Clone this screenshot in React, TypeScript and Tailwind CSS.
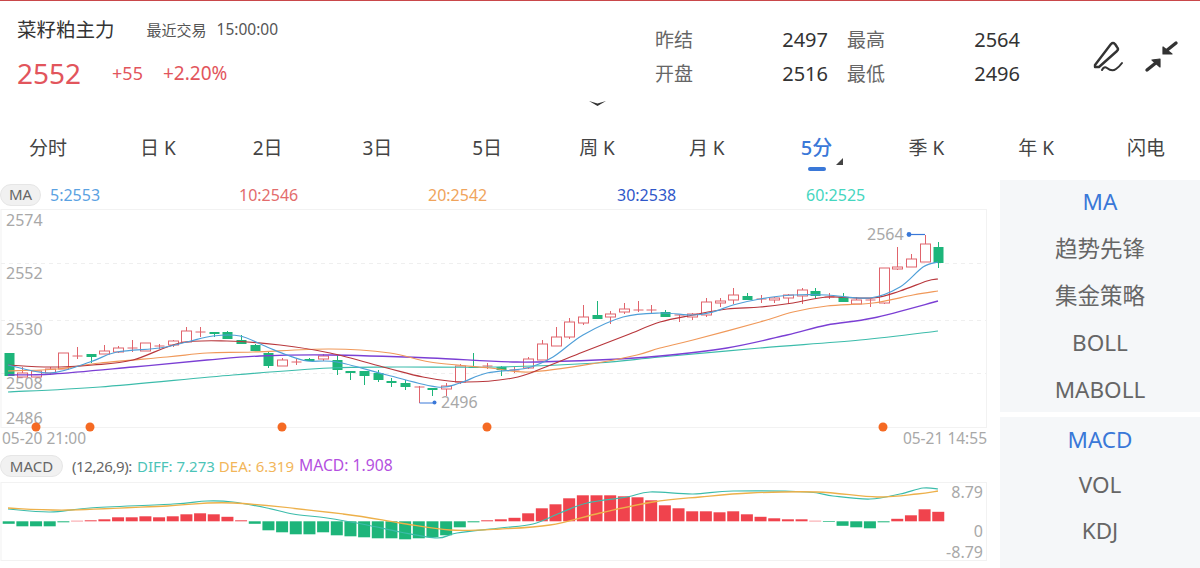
const red = "#e0646c"
const green = "#1db57a"

// [color, bodyTop, bodyBottom, high, low] in page pixels
const candles: [string, number, number, number, number][] = [
  ["g", 353, 376, 353, 376], ["r", 373, 377, 367, 377], ["r", 371, 377, 371, 377], ["r", 369, 373, 367, 375],
  ["r", 353, 369, 353, 369], ["r", 356, 357, 347, 359], ["g", 354, 357, 354, 363], ["r", 351, 354, 345, 354],
  ["r", 348, 352, 346, 353], ["r", 348, 349, 340, 352], ["r", 343, 351, 343, 351], ["r", 346, 347, 344, 349],
  ["r", 341, 345, 340, 347], ["r", 331, 342, 327, 342], ["r", 332, 332, 327, 337], ["g", 332, 334, 332, 337],
  ["g", 332, 339, 331, 339], ["g", 340, 344, 335, 344], ["g", 345, 351, 344, 351], ["g", 353, 366, 352, 368],
  ["r", 360, 366, 358, 366], ["r", 362, 362, 359, 365], ["g", 359, 361, 358, 361], ["r", 356, 359, 354, 361],
  ["g", 360, 370, 355, 375], ["g", 371, 373, 371, 380], ["g", 371, 376, 371, 385], ["g", 373, 380, 370, 382],
  ["g", 381, 383, 378, 387], ["g", 383, 387, 380, 390], ["r", 387, 387, 386, 403], ["g", 388, 390, 388, 396],
  ["r", 386, 389, 383, 396], ["r", 366, 382, 364, 384], ["g", 367, 368, 353, 368], ["r", 366, 366, 363, 369],
  ["g", 367, 370, 366, 376], ["r", 370, 370, 367, 373], ["r", 359, 368, 357, 369], ["r", 344, 360, 340, 360],
  ["r", 337, 346, 327, 346], ["r", 322, 337, 318, 339], ["r", 317, 323, 305, 325], ["g", 315, 319, 301, 319],
  ["r", 314, 317, 311, 324], ["r", 309, 312, 303, 314], ["r", 310, 310, 301, 312], ["r", 310, 310, 305, 313],
  ["g", 312, 317, 310, 317], ["r", 315, 316, 315, 322], ["r", 314, 317, 313, 320], ["r", 302, 315, 298, 317],
  ["r", 301, 303, 298, 307], ["r", 295, 300, 288, 304], ["g", 296, 300, 293, 300], ["r", 299, 299, 295, 303],
  ["r", 298, 300, 297, 303], ["r", 295, 298, 294, 304], ["r", 290, 296, 288, 304], ["g", 291, 296, 288, 299],
  ["r", 297, 297, 293, 299], ["g", 297, 302, 293, 302], ["r", 300, 304, 297, 304], ["r", 300, 300, 299, 307],
  ["r", 268, 303, 268, 304], ["r", 267, 269, 247, 270], ["r", 259, 267, 254, 267], ["r", 244, 262, 235, 262],
  ["g", 247, 263, 242, 268],
]

const ma5 = "8,365 50,373 90,362 117,352 160,348 187,342 213,336 240,336 267,347 287,355 307,361 337,362 387,375 437,387 460,383 487,373 527,368 553,357 583,335 623,317 660,313 693,315 713,312 733,305 760,299 793,295 827,295 870,298 900,287 923,267 938,262"
const ma10 = "8,365 50,367 93,365 133,360 180,343 227,341 280,345 330,353 387,368 423,377 463,382 513,378 543,368 583,352 627,335 660,322 693,315 727,309 760,307 793,303 827,297 873,298 900,291 927,281 938,279"
const ma20 = "8,371 57,369 100,363 167,357 207,353 253,352 330,349 390,353 430,362 490,368 530,372 597,363 637,355 660,348 693,340 760,322 793,312 827,306 873,303 913,295 938,291"
const ma30 = "8,375 53,374 133,367 207,360 260,356 330,355 430,358 517,362 597,360 660,356 727,348 787,335 827,325 873,318 938,301"
const ma60 = "8,392 100,387 233,375 330,368 397,367 497,367 597,363 660,357 760,348 860,340 938,331"

const diff = "8,509 50,512 90,508 173,504 207,501 233,502 267,508 293,514 327,518 367,525 400,532 437,538 457,533 500,528 533,524 560,513 587,503 627,497 650,492 693,494 733,491 807,492 833,496 870,499 900,494 923,488 938,489"
const dea = "8,508 67,510 167,506 233,503 343,514 400,523 450,530 500,529 550,525 600,513 653,502 700,497 750,493 817,492 877,497 917,494 938,491"

// positive goes up in red, negative goes down in green
const macdBars = [
  -2.5, -5, -5, -5, -1, 0.5, 1, 2, 4, 4, 5, 4, 5, 7, 8, 7, 4.5, 1, -2.5, -9, -11, -13, -13, -11, -14, -15, -16, -17, -17,
  -18, -17, -16, -14, -6, -1, 1, 2, 3.5, 8, 13, 17, 23, 26, 26, 26, 25, 24, 21, 16, 13, 10, 10, 9, 10, 7, 4.5, 3, 2, 2,
  0.5, -0.7, -4.5, -6, -7, -1, 2.5, 6, 12, 9.5,
]

const slotX = (i: number) => 8.7 + i * 13.67

// catmull-rom through the points so the averages don't look like polylines
function smooth(points: string) {
  const p = points.split(" ").map((s) => s.split(",").map(Number))
  let d = `M${p[0][0]} ${p[0][1]}`
  for (let i = 0; i < p.length - 1; i++) {
    const a = p[Math.max(i - 1, 0)]
    const b = p[i]
    const c = p[i + 1]
    const e = p[Math.min(i + 2, p.length - 1)]
    d += ` C${b[0] + (c[0] - a[0]) / 6} ${b[1] + (c[1] - a[1]) / 6} ${c[0] - (e[0] - b[0]) / 6} ${c[1] - (e[1] - b[1]) / 6} ${c[0]} ${c[1]}`
  }
  return d
}

function Pill({ label, width }: { label: string; width: string }) {
  return (
    <span className={`flex h-[22px] items-center justify-center rounded-full border border-[#e6e6e6] bg-[#f1f1f1] text-[15px] text-[#666] ${width}`}>
      {label}
    </span>
  )
}

function MainChart() {
  const labels: [string, number][] = [["2574", 226], ["2552", 279], ["2530", 335], ["2508", 389], ["2486", 424]]
  return (
    <svg viewBox="0 209 1000 219" className="block h-[219px] w-[1000px] overflow-visible">
      <rect x="1" y="209.5" width="985.5" height="218" fill="none" stroke="#f2f2f2" />
      {[263.5, 320.5, 373.5].map((y) => (
        <line key={y} x1="1" x2="986" y1={y} y2={y} stroke="#efefef" strokeDasharray="4 4" />
      ))}
      {labels.map(([t, y]) => (
        <text key={t} x="6" y={y} fontSize="16" fill="#a8a8a8">{t}</text>
      ))}
      {candles.map(([c, top, bottom, high, low], i) => {
        const x = Math.round(slotX(i)) + 0.5
        const color = c === "g" ? green : red
        return (
          <g key={i} stroke={color}>
            <line x1={x} x2={x} y1={high} y2={low} strokeWidth="1" />
            {c === "g" ? (
              <rect x={x - 5} y={top} width="10" height={Math.max(bottom - top, 1)} fill={color} strokeWidth="0" />
            ) : bottom - top < 2 ? (
              <line x1={x - 5} x2={x + 5} y1={top} y2={top} strokeWidth="1" />
            ) : (
              <rect x={x - 5} y={top} width="10" height={bottom - top} fill="#fff" strokeWidth="1" />
            )}
          </g>
        )
      })}
      <path d={smooth(ma60)} fill="none" stroke="#3cbcab" strokeWidth="1.2" />
      <path d={smooth(ma30)} fill="none" stroke="#7b3fd4" strokeWidth="1.3" />
      <path d={smooth(ma20)} fill="none" stroke="#f0995a" strokeWidth="1.2" />
      <path d={smooth(ma10)} fill="none" stroke="#b8373c" strokeWidth="1.2" />
      <path d={smooth(ma5)} fill="none" stroke="#4f9fd8" strokeWidth="1.2" />

      <polyline points="419.5,403 434,403" fill="none" stroke="#3a78d8" strokeWidth="1" />
      <circle cx="434.5" cy="402.5" r="2" fill="#3a78d8" />
      <text x="441" y="408" fontSize="16" fill="#a8a8a8">2496</text>
      <polyline points="909,234.5 925,234.5" fill="none" stroke="#3a78d8" strokeWidth="1.2" />
      <circle cx="909" cy="234.5" r="2.4" fill="#3a78d8" />
      <text x="867" y="240" fontSize="16" fill="#a8a8a8">2564</text>

      {[36, 90, 282, 487, 883].map((x) => (
        <circle key={x} cx={x} cy="427" r="4.5" fill="#f56a23" />
      ))}
    </svg>
  )
}

function MacdChart() {
  const zero = 521.3
  return (
    <svg viewBox="0 482 1000 80" className="block h-[80px] w-[1000px] overflow-visible">
      <rect x="1" y="482.5" width="985.5" height="78" fill="none" stroke="#f2f2f2" />
      {macdBars.map((v, i) => (
        <rect
          key={i}
          x={slotX(i) - 6}
          y={v > 0 ? zero - v : zero}
          width="12"
          height={Math.abs(v)}
          fill={v > 0 ? "#f0434d" : green}
        />
      ))}
      <path d={smooth(diff)} fill="none" stroke="#3cbcab" strokeWidth="1.2" />
      <path d={smooth(dea)} fill="none" stroke="#edb04a" strokeWidth="1.3" />
      <text x="983" y="498" textAnchor="end" fontSize="16" fill="#a8a8a8">8.79</text>
      <text x="983" y="537" textAnchor="end" fontSize="16" fill="#a8a8a8">0</text>
      <text x="983" y="558" textAnchor="end" fontSize="16" fill="#a8a8a8">-8.79</text>
    </svg>
  )
}

function PenIcon() {
  return (
    <svg viewBox="0 0 34 34" className="h-[34px] w-[34px]" fill="none" stroke="#333" strokeWidth="2.4" strokeLinejoin="round" strokeLinecap="round">
      <path d="M5 25 L21 4 Q23 2 25 4 L27 7 Q29 9 27 11 L9 27 L5 27 Z" />
      <path d="M12 30 Q14 26 17 28 Q22 32 26 29 Q29 27 32 23" strokeWidth="2" />
    </svg>
  )
}

function ShrinkIcon() {
  return (
    <svg viewBox="0 0 36 34" className="h-[34px] w-[36px]" fill="#333" stroke="#333" strokeLinejoin="round">
      <path d="M32 3 L22 11" strokeWidth="3.4" strokeLinecap="round" />
      <path d="M19 7 L19 14 L28 14 Z" strokeWidth="1.2" />
      <path d="M3 30 L13 22" strokeWidth="3.4" strokeLinecap="round" />
      <path d="M8 20 L16 19 L16 27 Z" strokeWidth="1.2" />
    </svg>
  )
}

function Stat({ label, value }: { label: string; value: string }) {
  return (
    <div className="flex w-[173px] items-center justify-between">
      <span className="text-[19px] text-[#666]">{label}</span>
      <span className="text-[20px] text-[#333]">{value}</span>
    </div>
  )
}

const tabs = ["分时", "日 K", "2日", "3日", "5日", "周 K", "月 K", "5分", "季 K", "年 K", "闪电"]
const overlays = ["MA", "趋势先锋", "集金策略", "BOLL", "MABOLL"]
const subs = ["MACD", "VOL", "KDJ"]
const maValues = [
  ["5:2553", "text-[#5ba2e2]"],
  ["10:2546", "text-[#e36c6c]"],
  ["20:2542", "text-[#f0a45c]"],
  ["30:2538", "text-[#2f57c9]"],
  ["60:2525", "text-[#45d6bf]"],
]

export default function App() {
  return (
    <div className="flex h-[568px] w-[1200px] flex-col overflow-hidden border-t border-[#c9484a] bg-white font-['Noto_Sans','Noto_Sans_CJK_SC',sans-serif]">
      {/* Quote header */}
      <div className="flex h-[94px] shrink-0">
        <div className="w-[655px] shrink-0 pl-[17px] pt-[15px]">
          <div className="flex h-[28px] items-center">
            <span className="text-[19.5px] text-[#333]">菜籽粕主力</span>
            <span className="ml-[32px] text-[15px] text-[#555]">最近交易</span>
            <span className="ml-[10px] text-[15.5px] text-[#555]">15:00:00</span>
          </div>
          <div className="mt-[5px] flex h-[48px] items-center text-[#e2555c]">
            <span className="text-[28px]">2552</span>
            <span className="ml-[31px] text-[18px]">+55</span>
            <span className="ml-[20px] text-[19px]">+2.20%</span>
          </div>
        </div>
        <div className="w-[365px] shrink-0 pt-[22px]">
          <div className="flex h-[34px] gap-[19px]">
            <Stat label="昨结" value="2497" />
            <Stat label="最高" value="2564" />
          </div>
          <div className="flex h-[34px] gap-[19px]">
            <Stat label="开盘" value="2516" />
            <Stat label="最低" value="2496" />
          </div>
        </div>
        <div className="flex items-start gap-[20px] pl-[70px] pt-[39px]">
          <PenIcon />
          <ShrinkIcon />
        </div>
      </div>

      <div className="flex h-[16px] shrink-0 justify-center pr-[6px]">
        <svg viewBox="0 0 17 5" className="mt-[6px] h-[5px] w-[17px]" fill="#333">
          <path d="M0 0 L8.5 2.6 L17 0 L8.5 5 Z" />
        </svg>
      </div>

      {/* Period tabs */}
      <div className="flex h-[69px] shrink-0 items-start justify-between pl-[18px] pr-[24px] pt-[23px]">
        {tabs.map((t) => (
          <div key={t} className="relative flex w-[60px] flex-col items-center">
            <span className={t === "5分" ? "text-[20px] leading-[28px] font-medium text-[#3a78d8]" : "text-[19px] leading-[28px] text-[#444]"}>{t}</span>
            {t === "5分" && (
              <>
                <span className="absolute top-[33px] h-[4px] w-[18px] rounded-full bg-[#3a78d8]" />
                <span className="absolute left-[49px] top-[24px] h-0 w-0 border-b-[7px] border-l-[7px] border-b-[#444] border-l-transparent" />
              </>
            )}
          </div>
        ))}
      </div>

      <div className="flex min-h-0 flex-1">
        <div className="w-[1000px] shrink-0">
          {/* MA legend */}
          <div className="flex h-[29px] items-center">
            <Pill label="MA" width="w-[41px]" />
            <div className="ml-[9px] flex">
              {maValues.map(([text, color]) => (
                <span key={text} className={`w-[189px] text-[16px] ${color}`}>{text}</span>
              ))}
            </div>
          </div>
          <MainChart />
          <div className="flex h-[27px] w-[987px] items-start justify-between pl-[2px] text-[15.5px] leading-[20px] text-[#a8a8a8]">
            <span>05-20 21:00</span>
            <span>05-21 14:55</span>
          </div>
          {/* MACD legend */}
          <div className="flex h-[27px] items-center pb-[5px] text-[15px]">
            <Pill label="MACD" width="w-[63px]" />
            <span className="ml-[9px] tracking-[-0.4px] text-[#666]">(12,26,9):</span>
            <span className="ml-[5px] text-[#4cc4b8]">DIFF: 7.273</span>
            <span className="ml-[4px] text-[#f2b65a]">DEA: 6.319</span>
            <span className="ml-[5px] text-[15.7px] text-[#b44fe0]">MACD: 1.908</span>
          </div>
          <MacdChart />
        </div>

        {/* Indicator picker */}
        <div className="flex w-[200px] shrink-0 flex-col gap-[5px] text-[22.5px] text-[#666]">
          <div className="flex h-[232px] flex-col justify-center bg-[#f5f7f9]">
            {overlays.map((o) => (
              <div key={o} className={`flex h-[47px] shrink-0 items-center justify-center ${o === "MA" ? "text-[#3a78d8]" : ""}`}>{o}</div>
            ))}
          </div>
          <div className="flex flex-1 flex-col bg-[#f5f7f9]">
            {subs.map((s) => (
              <div key={s} className={`flex h-[45.5px] items-center justify-center ${s === "MACD" ? "text-[#3a78d8]" : ""}`}>{s}</div>
            ))}
          </div>
        </div>
      </div>
    </div>
  )
}
